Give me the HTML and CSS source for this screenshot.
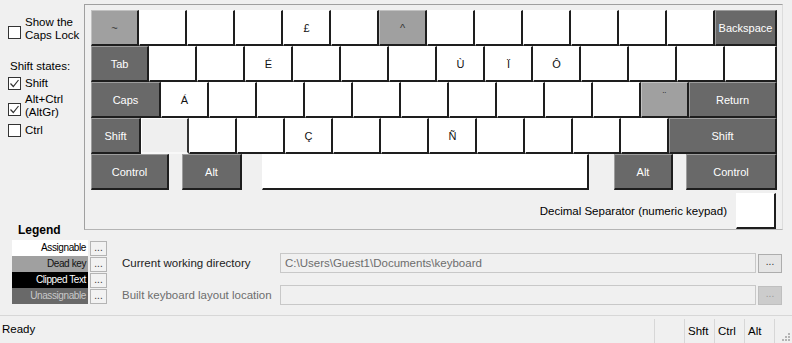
FILE: index.html
```html
<!DOCTYPE html>
<html lang="en">
<head>
  <meta charset="UTF-8">
  <title>Keyboard Layout Creator</title>
  <link rel="stylesheet" href="styles.css">
</head>
<body>
  <div class="app">

    <!-- Top: options + keyboard -->
    <div class="top">
      <div class="side">
        <label class="check two"><span class="box"></span><span>Show the<br>Caps Lock</span></label>
        <div class="states">Shift states:</div>
        <label class="check"><span class="box on"><svg width="11" height="11" viewBox="0 0 11 11"><path d="M1.5 5.5l2.8 3 5.2-6.5" fill="none" stroke="#333" stroke-width="1.2"/></svg></span><span>Shift</span></label>
        <label class="check two alt"><span class="box on"><svg width="11" height="11" viewBox="0 0 11 11"><path d="M1.5 5.5l2.8 3 5.2-6.5" fill="none" stroke="#333" stroke-width="1.2"/></svg></span><span>Alt+Ctrl<br>(AltGr)</span></label>
        <label class="check ctrl"><span class="box"></span><span>Ctrl</span></label>
        <div class="legend-title">Legend</div>
      </div>

      <div class="board">
        <div class="row">
          <div class="key dead">~</div>
          <div class="key"></div>
          <div class="key"></div>
          <div class="key"></div>
          <div class="key">£</div>
          <div class="key"></div>
          <div class="key dead">^</div>
          <div class="key"></div>
          <div class="key"></div>
          <div class="key"></div>
          <div class="key"></div>
          <div class="key"></div>
          <div class="key"></div>
          <div class="key fn w62">Backspace</div>
        </div>
        <div class="row">
          <div class="key fn w58">Tab</div>
          <div class="key"></div>
          <div class="key"></div>
          <div class="key">É</div>
          <div class="key"></div>
          <div class="key"></div>
          <div class="key"></div>
          <div class="key">Ù</div>
          <div class="key">Ï</div>
          <div class="key">Ô</div>
          <div class="key"></div>
          <div class="key"></div>
          <div class="key"></div>
          <div class="key w52"></div>
        </div>
        <div class="row">
          <div class="key fn w70">Caps</div>
          <div class="key">Á</div>
          <div class="key"></div>
          <div class="key"></div>
          <div class="key"></div>
          <div class="key"></div>
          <div class="key"></div>
          <div class="key"></div>
          <div class="key"></div>
          <div class="key"></div>
          <div class="key"></div>
          <div class="key dead small">¨</div>
          <div class="key fn w88">Return</div>
        </div>
        <div class="row">
          <div class="key fn w50">Shift</div>
          <div class="key blank"></div>
          <div class="key"></div>
          <div class="key"></div>
          <div class="key">Ç</div>
          <div class="key"></div>
          <div class="key"></div>
          <div class="key">Ñ</div>
          <div class="key"></div>
          <div class="key"></div>
          <div class="key"></div>
          <div class="key"></div>
          <div class="key fn w108">Shift</div>
        </div>
        <div class="row">
          <div class="key fn w78">Control</div>
          <div class="key fn w60 gap13">Alt</div>
          <div class="key space gap20"></div>
          <div class="key fn w59 gap25">Alt</div>
          <div class="key fn w91 gap13">Control</div>
        </div>
        <div class="decimal">
          <span>Decimal Separator (numeric keypad)</span>
          <div class="key dec"></div>
        </div>
      </div>
    </div>

    <!-- Bottom: legend + paths -->
    <div class="bottom">
      <div class="legend">
        <div class="lg-row"><span class="swatch assign">Assignable</span><span class="dots">...</span></div>
        <div class="lg-row"><span class="swatch deadkey">Dead key</span><span class="dots">...</span></div>
        <div class="lg-row"><span class="swatch clipped">Clipped Text</span><span class="dots">...</span></div>
        <div class="lg-row"><span class="swatch unassign">Unassignable</span><span class="dots">...</span></div>
      </div>
      <div class="fields">
        <div class="field">
          <span class="label">Current working directory</span>
          <div class="textbox">C:\Users\Guest1\Documents\keyboard</div>
          <span class="browse">...</span>
        </div>
        <div class="field off">
          <span class="label">Built keyboard layout location</span>
          <div class="textbox"></div>
          <span class="browse">...</span>
        </div>
      </div>
    </div>

    <!-- Status bar -->
    <div class="status">
      <div class="ready">Ready</div>
      <div class="panel"></div>
      <div class="panel">Shft</div>
      <div class="panel">Ctrl</div>
      <div class="panel">Alt</div>
      <div class="grip">
        <svg width="9" height="9" viewBox="0 0 9 9" fill="#b4b4b4">
          <rect x="7" y="1" width="2" height="2"/>
          <rect x="4" y="4" width="2" height="2"/><rect x="7" y="4" width="2" height="2"/>
          <rect x="1" y="7" width="2" height="2"/><rect x="4" y="7" width="2" height="2"/><rect x="7" y="7" width="2" height="2"/>
        </svg>
      </div>
    </div>

  </div>
</body>
</html>
```

FILE: styles.css
```css
* { margin: 0; padding: 0; box-sizing: border-box; }
body {
  font-family: "Liberation Sans", Arial, sans-serif;
  font-size: 11.5px;
  background: #f0f0f0;
  color: #000;
}
.app {
  width: 792px;
  height: 343px;
  display: flex;
  flex-direction: column;
}

/* top area */
.top {
  display: flex;
  height: 238px;
}
.side {
  width: 84px;
  display: flex;
  flex-direction: column;
  padding: 16px 0 1px 8px;
  line-height: 13px;
}
.check {
  display: flex;
  align-items: center;
  gap: 4px;
}
.check.two { margin-bottom: 18px; }
.check.two .box { margin-top: 6px; }
.check.alt { margin: 3px 0 5px; }
.box {
  width: 13px;
  height: 13px;
  border: 1px solid #333;
  background: #fff;
  display: flex;
  align-items: center;
  justify-content: center;
  flex-shrink: 0;
}
.states {
  margin: 0 0 4px 2px;
}
.legend-title {
  margin-top: auto;
  padding-left: 10px;
  font-weight: bold;
  font-size: 12px;
}

/* keyboard frame */
.board {
  margin-top: 4px;
  width: 699px;
  height: 226px;
  border: 1px solid #a0a0a0;
  border-right-color: #dcdcdc;
  border-bottom-color: #b4b4b4;
  padding: 5px 0 0 6px;
}
.row {
  display: flex;
  height: 36px;
}
.key {
  width: 48px;
  height: 36px;
  flex-shrink: 0;
  background: #fff;
  border-style: solid;
  border-width: 1px 2px 2px 1px;
  border-color: rgba(255,255,255,.35) #1e1e1e #1e1e1e rgba(255,255,255,.35);
  display: flex;
  align-items: center;
  justify-content: center;
  font-size: 11px;
  color: #111;
}
.key.dead { background: #a0a0a0; color: #333; }
.key.small { font-size: 10px; padding-bottom: 6px; }
.key.fn { background: #696969; color: #fff; }
.key.blank {
  background: #efefef;
  border-color: #fff #333 #f8f8f8 #fff;
}
.key.space { width: 327px; }
.w50 { width: 50px; }
.w52 { width: 52px; }
.w58 { width: 58px; }
.w59 { width: 59px; }
.w60 { width: 60px; }
.w62 { width: 62px; }
.w70 { width: 70px; }
.w78 { width: 78px; }
.w88 { width: 88px; }
.w91 { width: 91px; }
.w108 { width: 108px; }
.gap13 { margin-left: 13px; }
.gap20 { margin-left: 20px; }
.gap25 { margin-left: 25px; }

.decimal {
  margin-top: 3px;
  padding-right: 6px;
  display: flex;
  justify-content: flex-end;
  align-items: center;
  gap: 9px;
}
.key.dec { width: 40px; height: 36px; }

/* bottom area */
.bottom {
  display: flex;
  margin-top: 2px;
  height: 64px;
}
.legend {
  margin-left: 12px;
  width: 95px;
}
.lg-row {
  display: flex;
  align-items: center;
  height: 16px;
}
.swatch {
  width: 76px;
  height: 16px;
  font-size: 10px;
  letter-spacing: -0.4px;
  text-align: right;
  line-height: 16px;
  padding-right: 2px;
}
.assign { background: #fff; color: #000; }
.deadkey { background: #a0a0a0; color: #111; }
.clipped { background: #000; color: #fff; }
.unassign { background: #696969; color: #c8c8c8; }
.dots {
  margin-left: 2px;
  width: 17px;
  height: 15px;
  border: 1px solid #b4b4b4;
  background: #f2f2f2;
  font-size: 10px;
  line-height: 11px;
  text-align: center;
  color: #333;
}

.fields {
  margin-left: 15px;
  margin-right: 10px;
  flex: 1;
  padding-top: 13px;
  display: flex;
  flex-direction: column;
  gap: 12px;
}
.field {
  display: flex;
  align-items: center;
  height: 20px;
}
.label {
  width: 158px;
  color: #222;
}
.field.off .label { color: #6d6d6d; }
.textbox {
  flex: 1;
  height: 20px;
  border: 1px solid #c8c8c8;
  background: #f0f0f0;
  color: #6d6d6d;
  padding: 0 4px;
  line-height: 18px;
}
.browse {
  margin-left: 2px;
  width: 24px;
  height: 19px;
  border: 1px solid #adadad;
  background: #e5e5e5;
  text-align: center;
  font-size: 10px;
  line-height: 13px;
  color: #333;
}
.field.off .browse {
  background: #cccccc;
  border-color: #bfbfbf;
  color: #9a9a9a;
}

/* status bar */
.status {
  margin-top: auto;
  height: 28px;
  border-top: 1px solid #d7d7d7;
  display: flex;
  align-items: stretch;
  line-height: 27px;
}
.ready {
  flex: 1;
  padding-left: 2px;
}
.panel {
  width: 30px;
  margin-top: 3px;
  line-height: 24px;
  border-left: 1px solid #d7d7d7;
  padding-left: 3px;
}
.grip {
  width: 18px;
  margin-top: 3px;
  border-left: 1px solid #d7d7d7;
  display: flex;
  align-items: flex-end;
  justify-content: flex-end;
  padding: 0 2px 2px 0;
}
```
